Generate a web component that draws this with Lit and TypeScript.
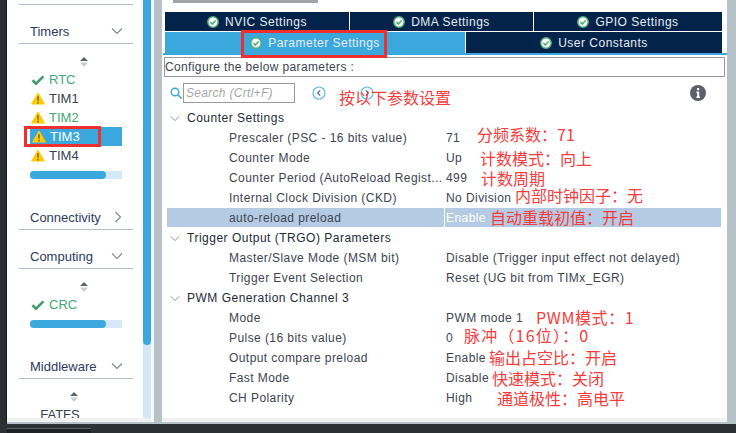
import { LitElement, html, css, svg } from "lit";
import { customElement } from "lit/decorators.js";

const okIcon = svg`<svg class="ok" viewBox="0 0 12 12"><circle cx="6" cy="6" r="5.2" fill="#fff" stroke="#4caf78" stroke-width="1.5"/><path d="M3.4 6.1 5.3 8 8.7 4.5" fill="none" stroke="#4caf78" stroke-width="1.6"/></svg>`;
const warn = svg`<svg class="warn" viewBox="0 0 14 13"><path d="M7 1 13.4 12H.6Z" fill="#fc0" stroke="#fc0" stroke-width="1" stroke-linejoin="round"/><path d="M7 4.2V8.8M7 9.8v1.6" stroke="#5a5030" stroke-width="1.3"/></svg>`;
const check = svg`<svg class="check" viewBox="0 0 14 12"><path d="M1.5 6.2 5 9.6 12.4 2.4" fill="none" stroke="#3f9d6c" stroke-width="2.6"/></svg>`;
const chevD = svg`<svg class="chev" viewBox="0 0 12 8"><path d="M1 1.5 6 6.5 11 1.5" fill="none" stroke="#7d8590" stroke-width="1.1"/></svg>`;
const chevR = svg`<svg class="chev-r" viewBox="0 0 8 12"><path d="M1.5 1 6.5 6 1.5 11" fill="none" stroke="#7d8590" stroke-width="1.1"/></svg>`;
const sort = svg`<svg class="sort" viewBox="0 0 8 10"><path d="M4 0 8 4H0Z" fill="#5c6470"/><path d="M0 5.6H8L4 10Z" fill="#c9ced3"/></svg>`;

const bar = html`<div class="hbar"><div class="hthumb"></div></div>`;

type Row = { k?: string; v?: string; head?: boolean; sel?: boolean };
const rows: Row[] = [
  { k: "Counter Settings", head: true },
  { k: "Prescaler (PSC - 16 bits value)", v: "71" },
  { k: "Counter Mode", v: "Up" },
  { k: "Counter Period (AutoReload Regist...", v: "499" },
  { k: "Internal Clock Division (CKD)", v: "No Division" },
  { k: "auto-reload preload", v: "Enable", sel: true },
  { k: "Trigger Output (TRGO) Parameters", head: true },
  { k: "Master/Slave Mode (MSM bit)", v: "Disable (Trigger input effect not delayed)" },
  { k: "Trigger Event Selection", v: "Reset (UG bit from TIMx_EGR)" },
  { k: "PWM Generation Channel 3", head: true },
  { k: "Mode", v: "PWM mode 1" },
  { k: "Pulse (16 bits value)", v: "0" },
  { k: "Output compare preload", v: "Enable" },
  { k: "Fast Mode", v: "Disable" },
  { k: "CH Polarity", v: "High" },
];

const notes: [string, number, number, number][] = [
  ["按以下参数设置", 339, 97, 0],
  ["分频系数：71", 477, 134, 0],
  ["计数模式：向上", 480, 158, 0],
  ["计数周期", 481, 178, 0],
  ["内部时钟因子：无", 515, 195, 0],
  ["自动重载初值：开启", 490, 217, 0],
  ["PWM模式：1", 536, 317, 0.6],
  ["脉冲（16位）：0", 464, 335, 1.2],
  ["输出占空比：开启", 489, 357, 0],
  ["快速模式：关闭", 492, 378, 0],
  ["通道极性：高电平", 497, 398, 0],
];

@customElement("app-root")
export class AppRoot extends LitElement {
  static styles = css`
    :host { display: block; width: 736px; height: 433px; overflow: hidden; position: relative; background: #2b3035;
      font-family: "Liberation Sans", Arial, sans-serif; font-size: 12px; color: #3d4450; }
    .frame { display: flex; height: 424px; margin-left: 6px; border-left: 1px solid #181a1c; background: #b6c1c8; }
    .side { width: 144px; height: 422px; background: #f0f2f2; display: flex; flex-shrink: 0; }
    .side-inner { width: 136px; height: 418px; background: #fff; overflow: hidden; padding: 0 10px 0 12px; box-sizing: border-box; }
    .vscroll { width: 8px; height: 418px; background: #d6e7f6; }
    .vthumb { width: 8px; height: 345px; background: #3aa8dc; border-radius: 0 0 4px 4px; }
    .white-strip { width: 3px; height: 422px; background: #f7f8f8; }
    .gutter { width: 9px; background: #b6c1c8; flex-shrink: 0; }
    .gutter.left { width: 8px; }
    .sec { border-bottom: 1px solid #b6bfc6; padding: 0 11px 4px; box-sizing: content-box; height: 16px;
      display: flex; align-items: center; justify-content: space-between; font-size: 13px; color: #2c3a5e; }
    .sec .chev { width: 12px; height: 8px; margin-right: -1px; }
    .sec .chev-r { width: 8px; height: 12px; }
    .first { height: 4px; border-bottom: 1px solid #b6bfc6; }
    .list { padding: 0 11px; }
    .sort { width: 8px; height: 10px; display: block; margin: 0 auto; }
    .list .sort { margin-left: 50px; }
    .item { display: flex; align-items: center; gap: 4px; height: 19px; font-size: 13px; color: #39404c; padding-left: 1px; white-space: nowrap; }
    .item.green { color: #3fa878; }
    .item.sel { background: #3aa8dc; color: #fff; padding-left: 2px; }
    .warn { width: 14px; height: 13px; flex-shrink: 0; }
    .check { width: 14px; height: 12px; flex-shrink: 0; }
    .hbar { height: 8px; background: #d6e7f6; }
    .hthumb { width: 76px; height: 8px; border-radius: 4px; background: #3aa8dc; }
    .fatfs { text-align: center; font-size: 13px; line-height: 15px; padding-right: 32px; margin-top: 5px; color: #39404c; }

    .main { flex: 1; background: #fff; position: relative; height: 418px; padding: 0 0 0 2px; min-width: 0; border-bottom: 4px solid #f0f2f2; }
    .topbar { width: 145px; height: 3px; background: #a0a4a8; margin-left: 9px; }
    .tabs { margin: 9px 0 0 1px; width: 557px; }
    .tabrow { display: grid; gap: 1px; }
    .tabrow.a { grid-template-columns: 184px 183px 1fr; height: 19px; margin-bottom: 1px; }
    .tabrow.b { grid-template-columns: 300px 1fr; height: 21px; }
    .tab { background: #03234b; color: #e8edf2; display: flex; align-items: center; justify-content: center; gap: 6px;
      font-size: 12px; letter-spacing: .5px; }
    .tab.on { background: #3aa8dc; }
    .ok { width: 12px; height: 12px; }
    .rule { height: 2px; background: #3aa8dc; width: 564px; margin-left: -1px; margin-bottom: 2px; }
    .desc { border: 1px solid #999; height: 18px; width: 559px; display: flex; align-items: center;
      font-size: 12px; letter-spacing: .37px; color: #3d4450; box-sizing: content-box; }
    .search { display: flex; align-items: center; height: 24px; margin-top: 4px; padding-left: 6px; }
    .mag { width: 12px; height: 12px; }
    .sbox { width: 112px; height: 20px; border: 1px solid #9a9a9a; box-sizing: border-box; margin-left: 1px; font-style: italic;
      color: #a6a6a6; padding-left: 2px; display: flex; align-items: center; letter-spacing: .3px; }
    .circ { width: 14px; height: 14px; margin-left: 17px; }
    .circ2 { width: 14px; height: 14px; margin-left: 34px; }
    .info { width: 16px; height: 16px; margin-left: auto; margin-right: 21px; }
    .table { margin-top: 3px; width: 554px; margin-left: 3px; }
    .row { display: grid; grid-template-columns: 278px 1fr; height: 20px; align-items: center; letter-spacing: .43px; white-space: nowrap; color: #3d4450; }
    .row.h { display: flex; gap: 7px; padding-left: 3px; color: #222a35; letter-spacing: .5px; }
    .row.h .chev { width: 10px; height: 7px; }
    .k { padding-left: 62px; }
    .v { padding-left: 1px; }
    .row.sel { background: #b4cbe3; height: 19px; margin-bottom: 1px; }
    .row.sel .k { height: 100%; display: flex; align-items: center; border-right: 1px solid #fff; width: 278px; box-sizing: border-box; }
    .row.sel .v { color: #fff; }
    .note { position: absolute; color: #f63b3b; font-family: "Noto Sans CJK SC", sans-serif; font-size: 16px; line-height: 20px; white-space: nowrap; transform: translateY(-50%); }
    .redbox { position: absolute; border: 3px solid #f0302f; box-sizing: border-box; }
    .b1 { left: 24px; top: 126px; width: 77px; height: 21px; }
    .b2 { left: 241px; top: 30px; width: 146px; height: 28px; }
    .dock { height: 9px; padding: 4px 0 0 7px; box-sizing: border-box; }
    .dock div { width: 84px; height: 5px; background: #1f2224; border-top: 1px solid #5a5f64; box-sizing: border-box; }
  `;

  render() {
    return html`
      <div class="frame">
        <div class="side">
          <div class="side-inner">
            <div class="first"></div>
            <div class="sec" style="margin-top:18px">Timers ${chevD}</div>
            <div class="list" style="margin-top:13px">
              ${sort}
              <div class="item green" style="margin-top:3px">${check} RTC</div>
              <div class="item">${warn} TIM1</div>
              <div class="item green">${warn} TIM2</div>
              <div class="item sel">${warn} TIM3</div>
              <div class="item">${warn} TIM4</div>
              <div style="height:6px"></div>
              ${bar}
            </div>
            <div class="sec" style="margin-top:30px">Connectivity ${chevR}</div>
            <div class="sec" style="margin-top:18px">Computing ${chevD}</div>
            <div class="list" style="margin-top:13px">
              ${sort}
              <div class="item green" style="margin-top:3px">${check} CRC</div>
              <div style="height:6px"></div>
              ${bar}
            </div>
            <div class="sec" style="margin-top:30px">Middleware ${chevD}</div>
            <div class="list" style="margin-top:13px">
              <div style="margin-left:-10px">${sort}</div>
              <div class="fatfs">FATFS</div>
            </div>
          </div>
          <div class="vscroll"><div class="vthumb"></div></div>
        </div>
        <div class="white-strip"></div>
        <div class="gutter left"></div>
        <div class="main">
          <div class="topbar"></div>
          <div class="tabs">
            <div class="tabrow a">
              <div class="tab">${okIcon} NVIC Settings</div>
              <div class="tab">${okIcon} DMA Settings</div>
              <div class="tab">${okIcon} GPIO Settings</div>
            </div>
            <div class="tabrow b">
              <div class="tab on">${okIcon} Parameter Settings</div>
              <div class="tab">${okIcon} User Constants</div>
            </div>
          </div>
          <div class="rule"></div>
          <div class="desc">Configure the below parameters :</div>
          <div class="search">
            <svg class="mag" viewBox="0 0 12 12"><circle cx="5" cy="5" r="3.8" fill="none" stroke="#3aa8dc" stroke-width="1.4"/><path d="M8 8 11.5 11.5" stroke="#3aa8dc" stroke-width="1.6"/></svg>
            <div class="sbox">Search (Crtl+F)</div>
            <svg class="circ" viewBox="0 0 14 14"><circle cx="7" cy="7" r="6" fill="none" stroke="#5cbce8" stroke-width="1.2"/><path d="M8.2 4.4 5.6 7 8.2 9.6" fill="none" stroke="#4a6a90" stroke-width="1.2"/></svg>
            <svg class="circ2" viewBox="0 0 14 14"><circle cx="7" cy="7" r="6" fill="none" stroke="#5cbce8" stroke-width="1.2"/><path d="M5.8 4.4 8.4 7 5.8 9.6" fill="none" stroke="#4a6a90" stroke-width="1.2"/></svg>
            <svg class="info" viewBox="0 0 16 16"><circle cx="8" cy="8" r="8" fill="#5d5f6b"/><rect x="7" y="3" width="2.2" height="2.2" fill="#fff"/><path d="M6.4 6.6H9.2V11.6H10V13H6.4V11.6H7.2V8H6.4Z" fill="#fff"/></svg>
          </div>
          <div class="table">
            ${rows.map((r) =>
              r.head
                ? html`<div class="row h">${chevD}<span>${r.k}</span></div>`
                : html`<div class="row ${r.sel ? "sel" : ""}"><div class="k">${r.k}</div><div class="v">${r.v}</div></div>`
            )}
          </div>
        </div>
        <div class="gutter"></div>
      </div>
      <div class="dock"><div></div></div>
      ${notes.map(([t, x, y, ls]) => html`<div class="note" style="left:${x}px;top:${y}px;letter-spacing:${ls}px">${t}</div>`)}
      <div class="redbox b1"></div>
      <div class="redbox b2"></div>
    `;
  }
}
